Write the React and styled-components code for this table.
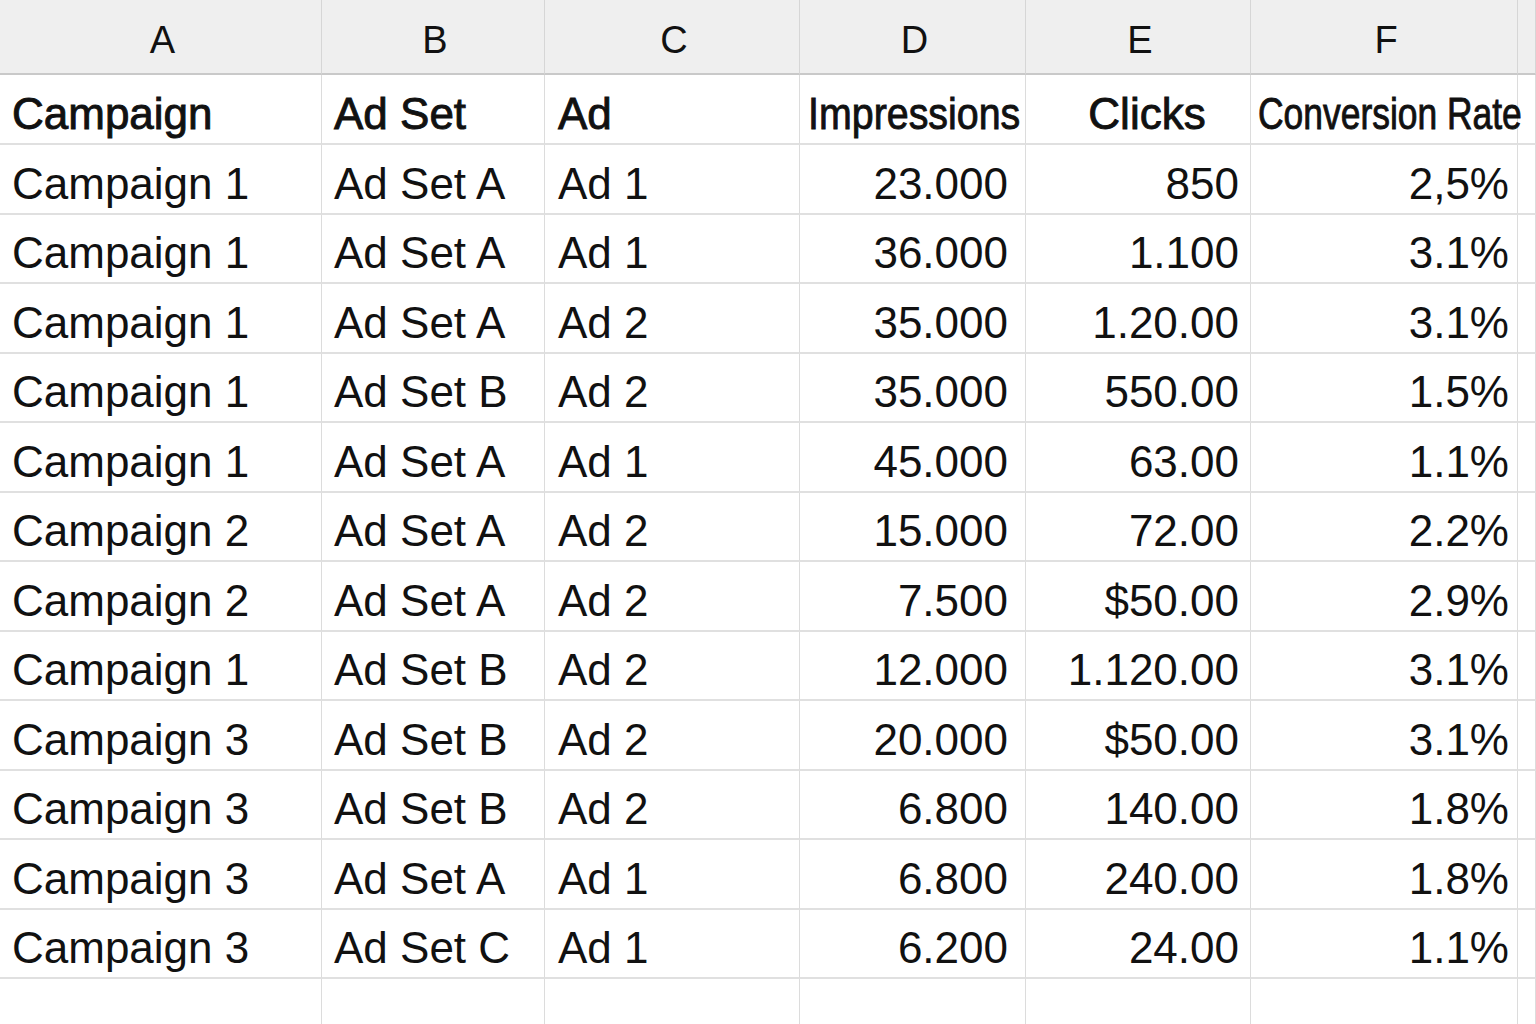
import React from 'react';
import styled, { createGlobalStyle } from 'styled-components';

const columns = ['A', 'B', 'C', 'D', 'E', 'F', ''];

const rows = [
  ['Campaign 1', 'Ad Set A', 'Ad 1', '23.000', '850', '2,5%'],
  ['Campaign 1', 'Ad Set A', 'Ad 1', '36.000', '1.100', '3.1%'],
  ['Campaign 1', 'Ad Set A', 'Ad 2', '35.000', '1.20.00', '3.1%'],
  ['Campaign 1', 'Ad Set B', 'Ad 2', '35.000', '550.00', '1.5%'],
  ['Campaign 1', 'Ad Set A', 'Ad 1', '45.000', '63.00', '1.1%'],
  ['Campaign 2', 'Ad Set A', 'Ad 2', '15.000', '72.00', '2.2%'],
  ['Campaign 2', 'Ad Set A', 'Ad 2', '7.500', '$50.00', '2.9%'],
  ['Campaign 1', 'Ad Set B', 'Ad 2', '12.000', '1.120.00', '3.1%'],
  ['Campaign 3', 'Ad Set B', 'Ad 2', '20.000', '$50.00', '3.1%'],
  ['Campaign 3', 'Ad Set B', 'Ad 2', '6.800', '140.00', '1.8%'],
  ['Campaign 3', 'Ad Set A', 'Ad 1', '6.800', '240.00', '1.8%'],
  ['Campaign 3', 'Ad Set C', 'Ad 1', '6.200', '24.00', '1.1%'],
];

// right padding for numeric columns D, E, F
const numPad = [null, null, null, 17, 11, 8];
const textPad = [12, 12, 13];

const App = () => {
  return (
    <Sheet>
      <GlobalStyle />
      {columns.map((letter, i) =>
        <ColHead key={letter + i}>{letter}</ColHead>
      )}

      <Cell $bold $pl={12}>Campaign</Cell>
      <Cell $bold $pl={12}>Ad Set</Cell>
      <Cell $bold $pl={13}>Ad</Cell>
      <Cell $bold $pl={8} $overflow>
        <Squeeze $scale={0.895}>Impressions</Squeeze>
      </Cell>
      <Cell $bold $align="center" $pl={18}>Clicks</Cell>
      <Cell $bold $pl={7} $overflow>
        <Squeeze $scale={0.805}>Conversion Rate</Squeeze>
      </Cell>
      <Cell />

      {rows.map((row, r) => (
        <React.Fragment key={r}>
          {row.map((value, c) =>
            numPad[c]
              ? <Cell key={c} $align="right" $pr={numPad[c]}>{value}</Cell>
              : <Cell key={c} $pl={textPad[c]}>{value}</Cell>
          )}
          <Cell />
        </React.Fragment>
      ))}

      {columns.map((_, i) => <Cell key={'e' + i} />)}
    </Sheet>
  );
};

const GlobalStyle = createGlobalStyle`
  html, body {
    margin: 0;
    padding: 0;
    background: #ffffff;
    overflow: hidden;
  }
`;

const Sheet = styled.div`
  display: grid;
  grid-template-columns: 322px 223px 255px 226px 225px 267px 1fr;
  grid-template-rows: 75px 70px repeat(12, 69.5px) 60px;
  width: 1536px;
  height: 1024px;
  overflow: hidden;
  font-family: "Liberation Sans", Arial, sans-serif;
  color: #111111;
  background: #ffffff;
`;

const ColHead = styled.div`
  display: flex;
  align-items: center;
  justify-content: center;
  padding: 8px 0 0 4px;
  background: #efefef;
  border-right: 1px solid #d6d6d6;
  border-bottom: 2px solid #c9c9c9;
  font-size: 38px;
  color: #111111;
`;

const Cell = styled.div`
  display: flex;
  align-items: center;
  justify-content: ${({ $align }) =>
    $align === 'right' ? 'flex-end' : $align === 'center' ? 'center' : 'flex-start'};
  padding: 10px ${({ $pr }) => $pr || 0}px 0 ${({ $pl }) => $pl || 0}px;
  border-right: 1px solid #dcdcdc;
  border-bottom: 2px solid #e0e0e0;
  font-size: 44px;
  -webkit-text-stroke: ${({ $bold }) => ($bold ? '0.9px #111111' : '0')};
  white-space: nowrap;
  overflow: ${({ $overflow }) => ($overflow ? 'visible' : 'hidden')};
  position: ${({ $overflow }) => ($overflow ? 'relative' : 'static')};
  z-index: ${({ $overflow }) => ($overflow ? 1 : 'auto')};
`;

const Squeeze = styled.span`
  display: inline-block;
  transform: scaleX(${({ $scale }) => $scale});
  transform-origin: left center;
`;

export default App;
